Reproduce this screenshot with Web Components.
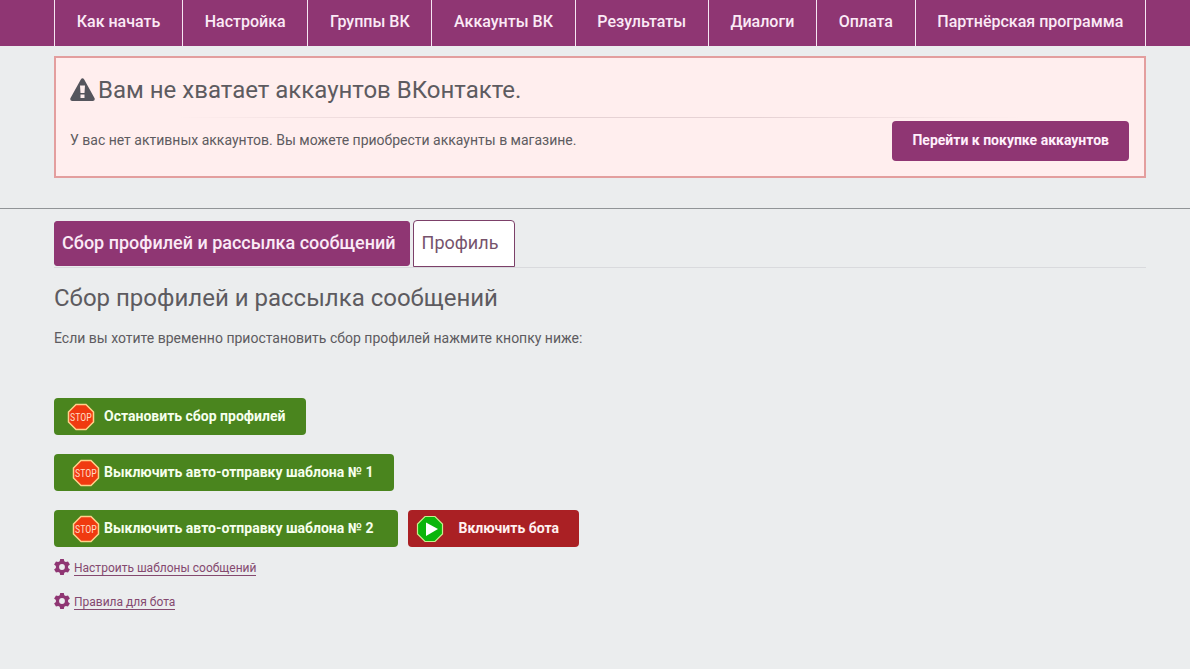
<!DOCTYPE html>
<html lang="ru">
<head>
<meta charset="utf-8">
<meta name="viewport" content="width=device-width, initial-scale=1">
<title>Сбор профилей и рассылка сообщений</title>
<style>
  :root { --brand: #8f3673; --ink: #5d5b60; --page: #ebedee; --gutter-start: 54px; --gutter-end: 44px; }
  body { margin: 0; background: var(--page); color: var(--ink); font: 14px/20px Roboto, "Liberation Sans", sans-serif; }
</style>
</head>
<body>
<bot-page></bot-page>
<script>
const define = (name, html) => {
  const template = document.createElement('template');
  template.innerHTML = html;
  customElements.define(name, class extends HTMLElement {
    constructor() {
      super();
      this.attachShadow({ mode: 'open' }).append(template.content.cloneNode(true));
    }
  });
};

define('main-nav', `
<style>
  :host { display: block; background: var(--brand); }
  nav { display: flex; padding: 0 var(--gutter-end) 0 var(--gutter-start); }
  a { flex: 1 1 auto; box-sizing: border-box; height: 46px; padding: 10px 21px 12px; text-align: center; white-space: nowrap;
      border-left: 1px solid #f6e6f2; color: #fbeaf6; font-size: 16px; line-height: 24px; font-weight: 500; text-decoration: none; }
  a:last-child { border-right: 1px solid #f6e6f2; }
</style>
<nav>
  <a href="#start">Как начать</a><a href="#settings">Настройка</a><a href="#groups">Группы ВК</a><a href="#accounts">Аккаунты ВК</a><a href="#results">Результаты</a><a href="#dialogs">Диалоги</a><a href="#payment">Оплата</a><a href="#partners">Партнёрская программа</a>
</nav>`);

define('warning-panel', `
<style>
  :host { display: block; box-sizing: border-box; padding: 16px 15px 15px 14px; border: 2px solid #e39e9e; background: #ffeeee; }
  header { display: flex; align-items: center; gap: 3px; }
  svg { width: 25px; height: 24px; flex: none; }
  .line { height: 1px; margin-top: 11px; background: linear-gradient(90deg, transparent 10%, #e6d2d4 35%, #e6d2d4 65%, transparent 90%); }
  .row { display: flex; justify-content: space-between; align-items: center; gap: 16px; margin-top: 3px; }
</style>
<header>
  <svg viewBox="0 0 25 24" aria-hidden="true"><path fill="#55555d" fill-rule="evenodd" d="M10.8 1.4Q12.5-.8 14.2 1.4L24.6 20.2Q25.3 23 22.8 23H2.2Q-.3 23 .4 20.2ZM10 7.5L10.5 15H14.5L15 7.5ZM10.5 16.6V20H14.5V16.6Z"/></svg>
  <slot name="title"></slot>
</header>
<div class="line"></div>
<div class="row"><slot></slot><slot name="action"></slot></div>`);

define('buy-button', `
<style>
  :host { display: block; }
  button { height: 40px; padding: 0 20px 2px; border: 0; border-radius: 4px; background: var(--brand); color: #fff0fb; font: 700 14px/20px Roboto, sans-serif; white-space: nowrap; }
</style>
<button type="button"><slot></slot></button>`);

define('tab-bar', `
<style>
  :host { display: flex; align-items: center; gap: 3px; border-bottom: 1px solid #d9dadd; }
  a { box-sizing: border-box; font-size: 18px; line-height: 24px; white-space: nowrap; text-decoration: none; }
  .on { height: 45px; padding: 9px 13px 10px 7px; background: var(--brand); border: 1px solid var(--brand); border-radius: 3px; color: #fbeaf6; font-weight: 500; }
  .off { height: 47px; padding: 10px 16px 11px 8px; border: 1px solid #7c4069; border-radius: 4px 4px 0 0; background: #fff; color: #76536c; }
</style>
<a class="on" href="#mailing" aria-current="page">Сбор профилей и рассылка сообщений</a><a class="off" href="#profile">Профиль</a>`);

define('stop-icon', `
<style>
  :host { display: block; width: 28px; height: 28px; }
  svg { display: block; width: 28px; height: 28px; }
  text { font: 10px "Liberation Sans Narrow", "Roboto Condensed", Roboto, sans-serif; }
</style>
<svg viewBox="0 0 28 28"><path d="M9 1.5H19L26.5 9V19L19 26.5H9L1.5 19V9Z" fill="#f03a10" stroke="#ffd28a" stroke-width="1.5"/><text x="14" y="18" text-anchor="middle" fill="#ffd9c0">STOP</text></svg>`);

define('play-icon', `
<style>
  :host { display: block; width: 28px; height: 28px; }
  svg { display: block; width: 28px; height: 28px; }
</style>
<svg viewBox="0 0 28 28" aria-hidden="true"><path d="M9 1.5H19L26.5 9V19L19 26.5H9L1.5 19V9Z" fill="#0bb50b" stroke="#c8ee8e" stroke-width="1.2"/><path d="M10 7.5L22 14L10 21Z" fill="#fff"/></svg>`);

define('action-button', `
<style>
  :host { display: block; }
  button { display: flex; align-items: center; gap: 9px; height: 37px; padding: 0 21px 0 13px; border: 0; border-radius: 4px; background: #4a851e; color: #f6ffed; font: 700 14px/20px Roboto, sans-serif; white-space: nowrap; }
  span { padding-bottom: 2px; }
  :host([kind="template"]) button { gap: 4px; padding-left: 18px; padding-right: var(--template-end, 21px); }
  :host([kind="start"]) button { gap: 14px; padding: 0 20px 0 8px; background: #aa2024; color: #fff0f0; }
</style>
<button type="button"><slot name="icon"></slot><span><slot></slot></span></button>`);

define('gear-link', `
<style>
  :host { display: flex; align-items: center; gap: 4px; height: 18px; }
  svg { width: 16px; height: 16px; flex: none; }
  a { padding-top: 2px; color: #84496f; font-size: 12px; line-height: 14px; text-decoration: none; border-bottom: 1px solid #84496f; }
</style>
<svg viewBox="0 0 16 16" aria-hidden="true"><path fill="#8f3673" fill-rule="evenodd" d="M6.2 0H9.8L10.3 2.3L11.8 3.1L14 2.4L15.9 5.5L14.1 7.1V8.9L15.9 10.5L14 13.6L11.8 12.9L10.3 13.7L9.8 16H6.2L5.7 13.7L4.2 12.9L2 13.6L.1 10.5L1.9 8.9V7.1L.1 5.5L2 2.4L4.2 3.1L5.7 2.3ZM8 5.1A2.9 2.9 0 1 0 8 10.9A2.9 2.9 0 1 0 8 5.1Z"/></svg>
<a href="#setup"><slot></slot></a>`);

define('bot-page', `
<style>
  :host { display: block; }
  .wrap { padding: 0 var(--gutter-end) 0 var(--gutter-start); }
  .alert { padding-top: 10px; padding-bottom: 30px; border-bottom: 1px solid #919497; }
  .content { padding-top: 11px; }
  h1, h2 { margin: 0; font-size: 24px; line-height: 32px; font-weight: 400; }
  h1 { margin-top: 14px; }
  p { margin: 0; }
  .alert p { padding-bottom: 2px; }
  .hint { margin: 14px 0 50px; }
  .actions { display: grid; justify-items: start; gap: 19px; }
  .pair { display: flex; flex-wrap: wrap; gap: 10px; --template-end: 25px; }
  .links { display: grid; gap: 16px; margin-top: 11px; }
</style>
<main-nav></main-nav>
<section class="wrap alert">
  <warning-panel>
    <h2 slot="title">Вам не хватает аккаунтов ВКонтакте.</h2>
    <p>У вас нет активных аккаунтов. Вы можете приобрести аккаунты в магазине.</p>
    <buy-button slot="action">Перейти к покупке аккаунтов</buy-button>
  </warning-panel>
</section>
<main class="wrap content">
  <tab-bar></tab-bar>
  <h1>Сбор профилей и рассылка сообщений</h1>
  <p class="hint">Если вы хотите временно приостановить сбор профилей нажмите кнопку ниже:</p>
  <div class="actions">
    <action-button><stop-icon slot="icon"></stop-icon>Остановить сбор профилей</action-button>
    <action-button kind="template"><stop-icon slot="icon"></stop-icon>Выключить авто-отправку шаблона № 1</action-button>
    <div class="pair">
      <action-button kind="template"><stop-icon slot="icon"></stop-icon>Выключить авто-отправку шаблона № 2</action-button>
      <action-button kind="start"><play-icon slot="icon"></play-icon>Включить бота</action-button>
    </div>
  </div>
  <div class="links">
    <gear-link>Настроить шаблоны сообщений</gear-link>
    <gear-link>Правила для бота</gear-link>
  </div>
</main>`);
</script>
</body>
</html>
